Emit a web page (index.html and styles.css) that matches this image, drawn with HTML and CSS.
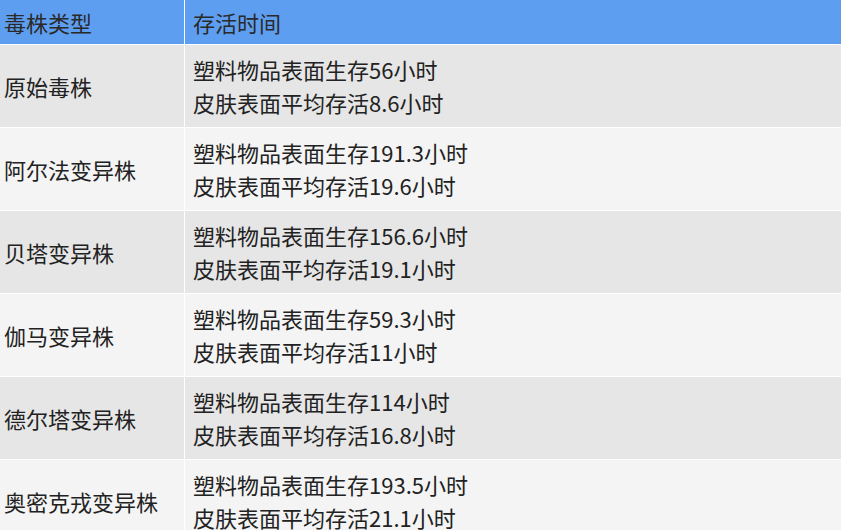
FILE: index.html
```html
<!DOCTYPE html>
<html lang="zh">
<head>
<meta charset="utf-8">
<link rel="stylesheet" href="styles.css">
</head>
<body>
<div class="table">
  <div class="cell head c1">毒株类型</div>
  <div class="cell head c2">存活时间</div>

  <div class="cell odd c1">原始毒株</div>
  <div class="cell odd c2"><div>塑料物品表面生存56小时<br>皮肤表面平均存活8.6小时</div></div>

  <div class="cell even c1">阿尔法变异株</div>
  <div class="cell even c2"><div>塑料物品表面生存191.3小时<br>皮肤表面平均存活19.6小时</div></div>

  <div class="cell odd c1">贝塔变异株</div>
  <div class="cell odd c2"><div>塑料物品表面生存156.6小时<br>皮肤表面平均存活19.1小时</div></div>

  <div class="cell even c1">伽马变异株</div>
  <div class="cell even c2"><div>塑料物品表面生存59.3小时<br>皮肤表面平均存活11小时</div></div>

  <div class="cell odd c1">德尔塔变异株</div>
  <div class="cell odd c2"><div>塑料物品表面生存114小时<br>皮肤表面平均存活16.8小时</div></div>

  <div class="cell even c1">奥密克戎变异株</div>
  <div class="cell even c2"><div>塑料物品表面生存193.5小时<br>皮肤表面平均存活21.1小时</div></div>
</div>
</body>
</html>
```

FILE: styles.css
```css
html, body {
  margin: 0;
  padding: 0;
  background: #ffffff;
}
body {
  font-family: "Noto Sans CJK SC", "Noto Sans", sans-serif;
  font-size: 22px;
  line-height: 33px;
  color: #222222;
}
.table {
  display: grid;
  grid-template-columns: 184px 656px;
  grid-template-rows: 44px repeat(6, 82px);
  gap: 1px;
  background: #ffffff;
  width: 841px;
}
.cell {
  display: flex;
  align-items: center;
  white-space: nowrap;
}
.c1 { padding-left: 4px; }
.c2 { padding-left: 8px; }
.head {
  background: #5e9ef0;
  color: #2a2a2a;
}
.odd { background: #e6e6e6; }
.even { background: #f4f4f4; }
```
